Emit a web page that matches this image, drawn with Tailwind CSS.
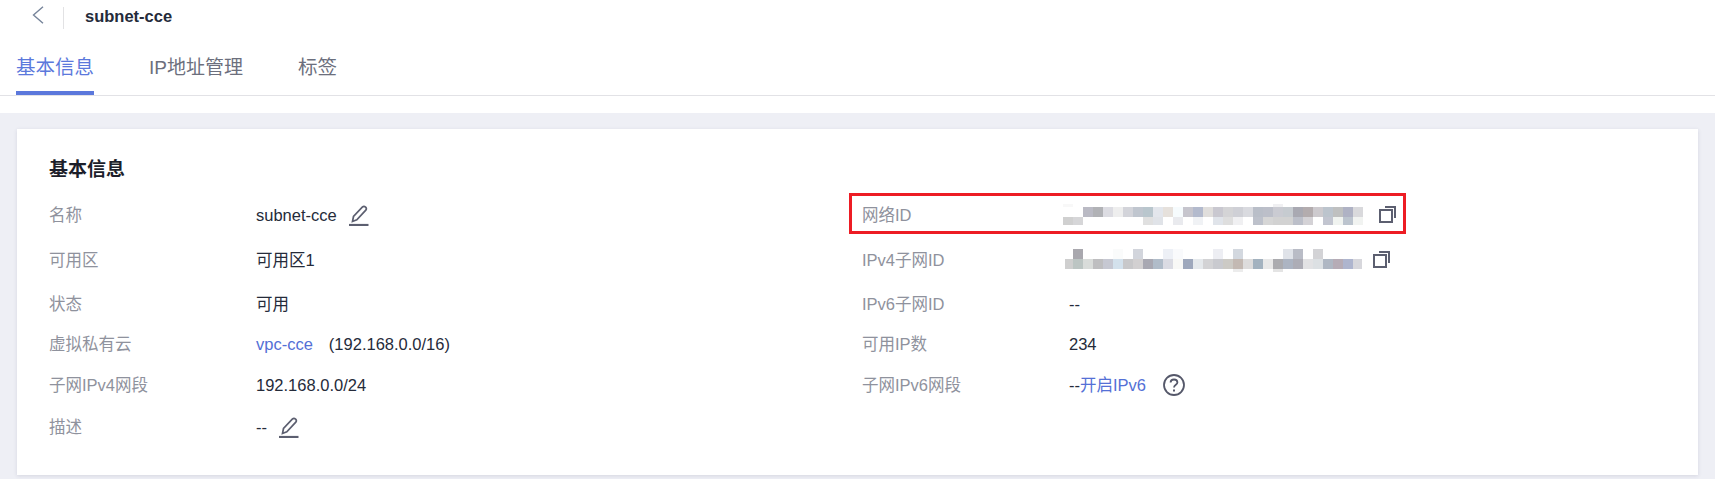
<!DOCTYPE html>
<html lang="zh">
<head>
<meta charset="utf-8">
<script src="https://cdn.jsdelivr.net/npm/@tailwindcss/browser@4"></script>
<title>subnet-cce</title>
</head>
<body class="h-[479px] overflow-hidden bg-[#eeeff5] font-['Liberation_Sans','Noto_Sans_CJK_SC',sans-serif] text-[16.5px] text-[#252b3a]">
  <div class="bg-white h-[113px]">
    <header class="h-[30px] flex items-center pl-[32px]">
      <svg class="w-[12px] h-[18px]" viewBox="0 0 12 18" fill="none" stroke="#76849a" stroke-width="1.4"><path d="M11 .7 1.5 9 11 17.3"/></svg>
      <span class="ml-[19px] w-px h-[22px] bg-[#e2e2e4] mt-[6px]"></span>
      <h1 class="ml-[21px] pt-[2px] text-[16.5px] font-bold">subnet-cce</h1>
    </header>
    <nav class="h-[66px] border-b border-[#e2e2e6] pl-[16px] flex gap-[55px] text-[19.5px] text-[#6c6f7d]">
      <a class="h-[65px] w-[78px] pt-[21px] leading-[33px] border-b-4 border-[#5b78dc] text-[#5b78dc]">基本信息</a>
      <a class="w-[94px] whitespace-nowrap pt-[21px] leading-[33px] text-[19px]">IP地址管理</a>
      <a class="pt-[21px] leading-[33px]">标签</a>
    </nav>
  </div>
  <main class="pt-[16px] px-[17px]">
    <section class="bg-white h-[346px] pl-[32px] pt-[22px] shadow-[0_1px_4px_rgba(40,45,80,0.12)]">
      <h2 class="text-[19px] font-bold leading-[38px] h-[42px] text-[#1c1e2a]">基本信息</h2>
      <div class="flex">
        <div class="w-[813px]">
          <div class="h-[44px] flex items-center"><span class="w-[207px] text-[#8f929d]">名称</span><span>subnet-cce</span>
            <svg class="ml-[12px] w-[20px] h-[21px]" viewBox="0 0 20 21" fill="none" stroke="#5c5f70" stroke-width="1.7"><path d="M3.5 16.5 4.5 11.5 13.5 2 Q15 .8 16.6 2.2 18 3.7 16.8 5.2L7.8 14.8Z"/><path stroke-width="2.2" d="M0 20H19.5"/></svg>
          </div>
          <div class="h-[46px] flex items-center"><span class="w-[207px] text-[#8f929d]">可用区</span><span>可用区1</span></div>
          <div class="h-[42px] flex items-center"><span class="w-[207px] text-[#8f929d]">状态</span><span>可用</span></div>
          <div class="h-[38px] flex items-center"><span class="w-[207px] text-[#8f929d]">虚拟私有云</span><a class="text-[#5470d6]">vpc-cce</a><span class="ml-[16px]">(192.168.0.0/16)</span></div>
          <div class="h-[44px] flex items-center"><span class="w-[207px] text-[#8f929d]">子网IPv4网段</span><span>192.168.0.0/24</span></div>
          <div class="h-[40px] flex items-center"><span class="w-[207px] text-[#8f929d]">描述</span><span>--</span>
            <svg class="ml-[12px] w-[20px] h-[21px]" viewBox="0 0 20 21" fill="none" stroke="#5c5f70" stroke-width="1.7"><path d="M3.5 16.5 4.5 11.5 13.5 2 Q15 .8 16.6 2.2 18 3.7 16.8 5.2L7.8 14.8Z"/><path stroke-width="2.2" d="M0 20H19.5"/></svg>
          </div>
        </div>
        <div class="flex-1">
          <div class="relative h-[44px] flex items-center"><span class="w-[201px] text-[#8f929d]">网络ID</span>
            <svg class="w-[300px] h-[21px] -mt-[2px]" viewBox="0 204 300 21" shape-rendering="crispEdges">
              <rect x="0" y="204" width="10" height="3" fill="#f8f8f8"/><rect x="210" y="204" width="10" height="3" fill="#f0f0f2"/>
              <g transform="translate(0 207)">
                <rect x="20" width="10" height="10" fill="#babac4"/><rect x="30" width="10" height="10" fill="#b1b2b6"/><rect x="40" width="10" height="10" fill="#dcdce2"/><rect x="50" width="10" height="10" fill="#eeeeee"/><rect x="60" width="10" height="10" fill="#d3d4da"/><rect x="70" width="10" height="10" fill="#c0c6cf"/><rect x="80" width="10" height="10" fill="#b9c6cd"/><rect x="90" width="10" height="10" fill="#e3e6ec"/><rect x="100" width="10" height="10" fill="#e6e1dc"/><rect x="110" width="10" height="10" fill="#f6fbfd"/><rect x="120" width="10" height="10" fill="#c6c5cd"/><rect x="130" width="10" height="10" fill="#b3bacd"/><rect x="140" width="10" height="10" fill="#e0dedc"/><rect x="150" width="10" height="10" fill="#c9c8d0"/><rect x="160" width="10" height="10" fill="#d4d4d6"/><rect x="170" width="10" height="10" fill="#cfd0d6"/><rect x="180" width="10" height="10" fill="#d9dadf"/><rect x="190" width="10" height="10" fill="#b9bec8"/><rect x="200" width="10" height="10" fill="#bcbfc9"/><rect x="210" width="10" height="10" fill="#cacbd2"/><rect x="220" width="10" height="10" fill="#c6cbd0"/><rect x="230" width="10" height="10" fill="#a9a9b2"/><rect x="240" width="10" height="10" fill="#b3acae"/><rect x="250" width="10" height="10" fill="#cdcace"/><rect x="260" width="10" height="10" fill="#bcc4cd"/><rect x="270" width="10" height="10" fill="#bfc0c0"/><rect x="280" width="10" height="10" fill="#afb2c4"/><rect x="290" width="10" height="10" fill="#d9d9dc"/>
              </g>
              <g transform="translate(0 217)">
                <rect x="0" width="10" height="8" fill="#d0d0d0"/><rect x="10" width="10" height="8" fill="#d6d6d8"/><rect x="80" width="10" height="8" fill="#e0e0e0"/><rect x="90" width="10" height="8" fill="#e0e3e8"/><rect x="110" width="10" height="8" fill="#e9eaee"/><rect x="130" width="10" height="8" fill="#f0f2f5"/><rect x="150" width="10" height="8" fill="#e0e4ea"/><rect x="160" width="10" height="8" fill="#dedede"/><rect x="170" width="10" height="8" fill="#f0f0f2"/><rect x="190" width="10" height="8" fill="#bdc1cb"/><rect x="200" width="10" height="8" fill="#d6d6d6"/><rect x="210" width="20" height="8" fill="#d2d2d2"/><rect x="230" width="10" height="8" fill="#bcbfc9"/><rect x="240" width="10" height="8" fill="#d4d2d6"/><rect x="260" width="10" height="8" fill="#c2c5d0"/><rect x="270" width="10" height="8" fill="#f0f3f0"/><rect x="280" width="10" height="8" fill="#bcc4ce"/><rect x="290" width="10" height="8" fill="#f1f3f1"/>
              </g>
            </svg>
            <svg class="ml-[16px] w-[17px] h-[17px] -mt-[1px]" viewBox="0 0 17 17" fill="none" stroke="#5c5f70" stroke-width="2"><rect x="1" y="4" width="12" height="12"/><path d="M6 1H16V12"/></svg>
            <div class="absolute left-[-13px] top-0 w-[557px] h-[41px] border-[3px] border-[#ed1c24]"></div>
          </div>
          <div class="h-[46px] flex items-center"><span class="w-[201px] text-[#8f929d]">IPv4子网ID</span>
            <svg class="w-[300px] h-[23px]" viewBox="0 247 300 23" shape-rendering="crispEdges">
              <g transform="translate(0 247)">
                <rect x="10" width="10" height="10" fill="#a9a8ae"/><rect x="50" width="10" height="10" fill="#fafbfb"/><rect x="70" width="10" height="10" fill="#d2d5dc"/><rect x="100" width="10" height="10" fill="#edf0f6"/><rect x="110" width="10" height="10" fill="#f9fafc"/><rect x="150" width="10" height="10" fill="#edeef3"/><rect x="170" width="10" height="10" fill="#d3d8df"/><rect x="220" width="10" height="10" fill="#e0e3e9"/><rect x="230" width="10" height="10" fill="#b9bcc6"/><rect x="250" width="10" height="10" fill="#d3d3d6"/>
              </g>
              <g transform="translate(0 257)">
                <rect x="2" width="8" height="10" fill="#cfcfcf"/><rect x="10" width="10" height="10" fill="#bcc5c3"/><rect x="20" width="10" height="10" fill="#d9dcda"/><rect x="30" width="10" height="10" fill="#bebec0"/><rect x="40" width="10" height="10" fill="#c6c8d2"/><rect x="50" width="10" height="10" fill="#d3e1ec"/><rect x="60" width="10" height="10" fill="#c8c8ca"/><rect x="70" width="10" height="10" fill="#d2d0d1"/><rect x="80" width="10" height="10" fill="#a8a8b2"/><rect x="90" width="10" height="10" fill="#b0bcc9"/><rect x="100" width="10" height="10" fill="#dadbe3"/><rect x="110" width="10" height="10" fill="#f8f8f6"/><rect x="120" width="10" height="10" fill="#9ea8bc"/><rect x="130" width="10" height="10" fill="#e5e9ec"/><rect x="140" width="10" height="10" fill="#d3d3d5"/><rect x="150" width="10" height="10" fill="#c9cacf"/><rect x="160" width="10" height="10" fill="#cccac5"/><rect x="170" width="10" height="10" fill="#c3b9b3"/><rect x="180" width="10" height="10" fill="#dddcdc"/><rect x="190" width="10" height="10" fill="#a3b2bf"/><rect x="200" width="10" height="10" fill="#e8e8e8"/><rect x="210" width="10" height="10" fill="#ababaf"/><rect x="220" width="10" height="10" fill="#acb4c2"/><rect x="230" width="10" height="10" fill="#adadb6"/><rect x="240" width="10" height="10" fill="#e2e2e4"/><rect x="250" width="10" height="10" fill="#dce0e3"/><rect x="260" width="10" height="10" fill="#afb7c3"/><rect x="270" width="10" height="10" fill="#b6acb6"/><rect x="280" width="10" height="10" fill="#aeb5ce"/><rect x="290" width="9" height="10" fill="#d7d7dc"/>
              </g>
              <rect x="170" y="267" width="10" height="3" fill="#ececec"/><rect x="210" y="267" width="10" height="3" fill="#e4e4e4"/>
            </svg>
            <svg class="ml-[10px] -mt-[2px] w-[17px] h-[17px]" viewBox="0 0 17 17" fill="none" stroke="#5c5f70" stroke-width="2"><rect x="1" y="4" width="12" height="12"/><path d="M6 1H16V12"/></svg>
          </div>
          <div class="h-[42px] flex items-center"><span class="w-[207px] text-[#8f929d]">IPv6子网ID</span><span>--</span></div>
          <div class="h-[38px] flex items-center"><span class="w-[207px] text-[#8f929d]">可用IP数</span><span>234</span></div>
          <div class="h-[44px] flex items-center"><span class="w-[207px] text-[#8f929d]">子网IPv6网段</span><span>--</span><a class="text-[#5470d6]">开启IPv6</a>
            <svg class="ml-[17px] w-[22px] h-[22px]" viewBox="0 0 22 22" fill="none" stroke="#55586a" stroke-width="1.8"><circle cx="11" cy="11" r="10"/><path d="M7.6 8.6C7.6 6.7 9 5.5 11 5.5S14.4 6.8 14.4 8.5C14.4 10.8 11 10.9 11 13.6"/><path stroke-width="2" d="M11 15.4V17.4"/></svg>
          </div>
        </div>
      </div>
    </section>
  </main>
</body>
</html>
